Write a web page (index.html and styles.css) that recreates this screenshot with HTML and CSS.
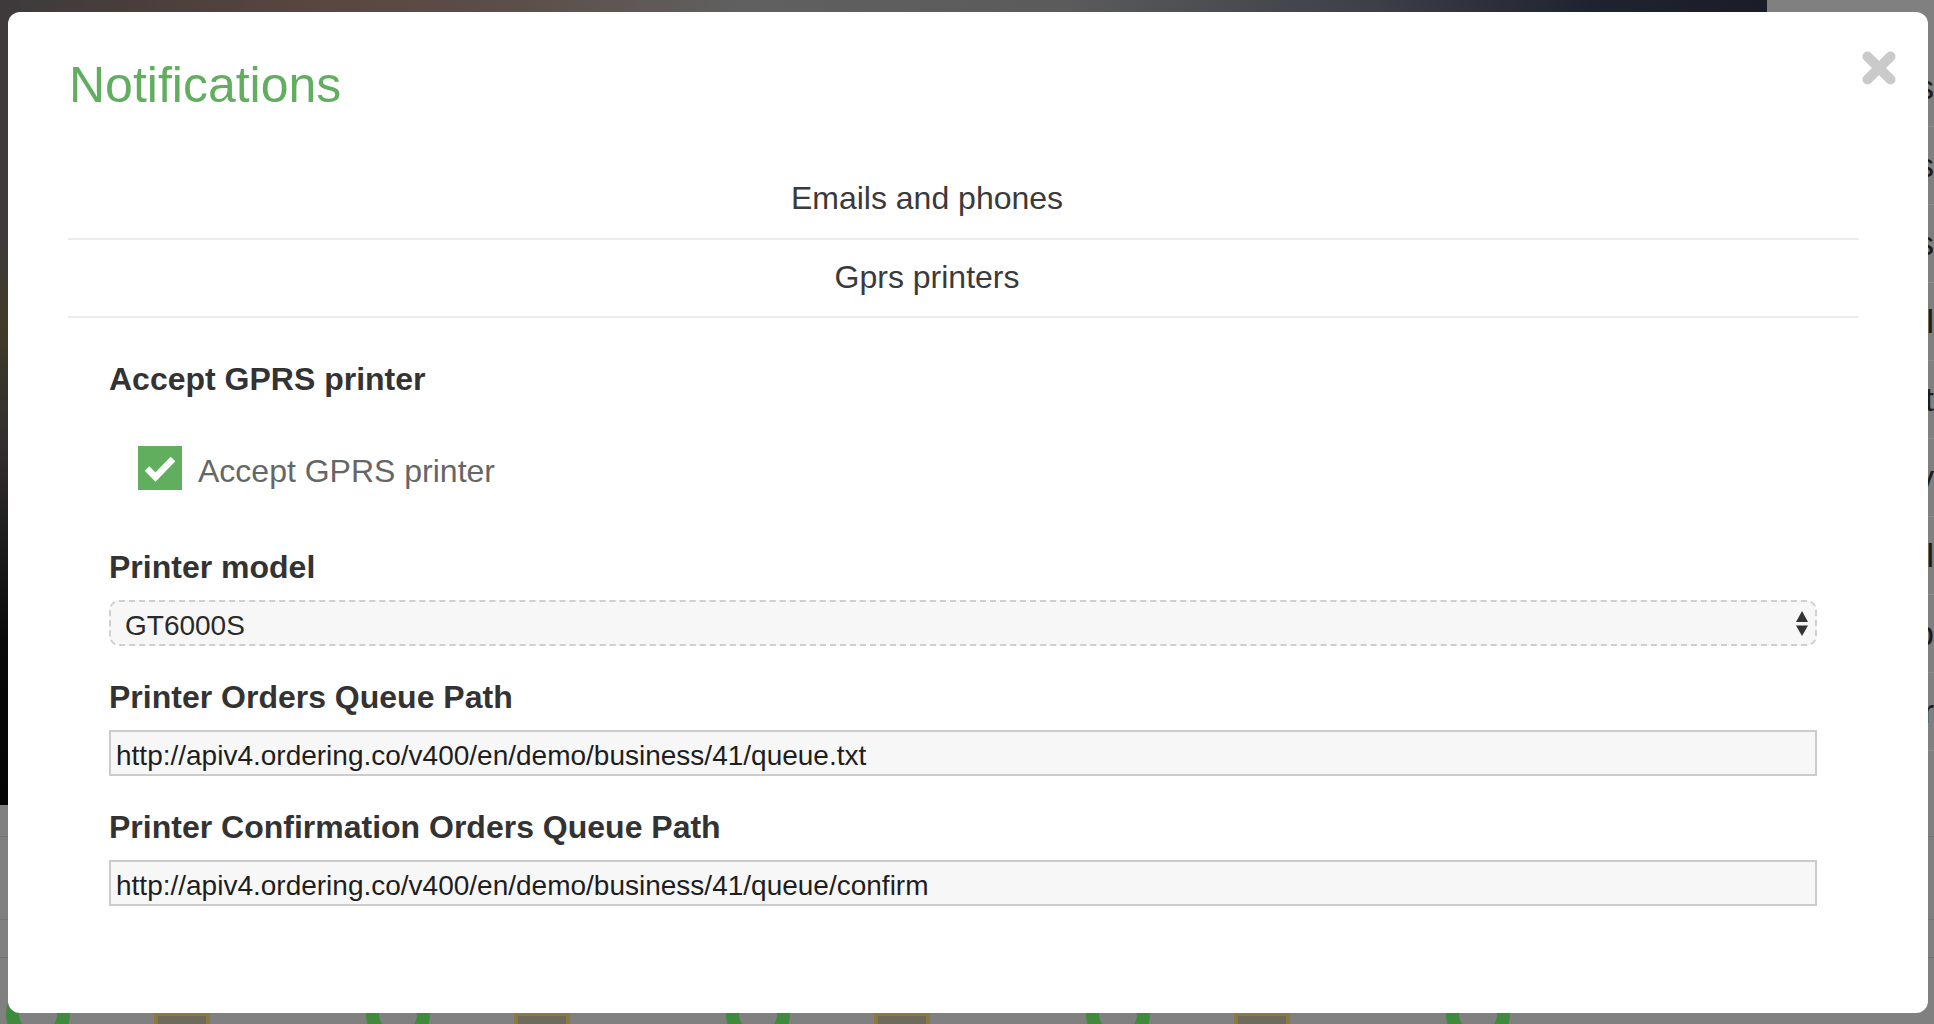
FILE: index.html
```html
<!DOCTYPE html>
<html lang="en">
<head>
<meta charset="utf-8">
<title>Notifications</title>
<link rel="stylesheet" href="styles.css">
</head>
<body>
<div class="page">
  <div class="top">
    <div class="hero"></div>
    <div class="side">
      <div class="side-row"><span>Schedules</span></div>
      <div class="side-row"><span>Zones</span></div>
      <div class="side-row"><span>Menus</span></div>
      <div class="side-row"><span>Email</span></div>
      <div class="side-row"><span>Print</span></div>
      <div class="side-row"><span>Delivery</span></div>
      <div class="side-row"><span>Total</span></div>
      <div class="side-row"><span>Web</span></div>
      <div class="side-row"><span>Order</span></div>
    </div>
  </div>
  <div class="list">
    <div class="list-row list-row-a"></div>
    <div class="list-row list-row-b"></div>
    <div class="list-row list-row-c"></div>
  </div>
  <div class="cards">
    <div class="card"><span class="ring"></span><span class="printer"></span></div>
    <div class="card"><span class="ring"></span><span class="printer"></span></div>
    <div class="card"><span class="ring"></span><span class="printer"></span></div>
    <div class="card"><span class="ring"></span><span class="printer"></span></div>
    <div class="card"><span class="ring"></span></div>
  </div>
</div>

<div class="modal">
  <button class="close" type="button" aria-label="Close">
    <svg width="34" height="34" viewBox="0 0 34 34"><path d="M5.5 5.5 L28.5 28.5 M28.5 5.5 L5.5 28.5" stroke="#cacaca" stroke-width="10" stroke-linecap="round" fill="none"/></svg>
  </button>
  <h1 class="title">Notifications</h1>
  <ul class="tabs">
    <li class="tab tab-first">Emails and phones</li>
    <li class="tab tab-second">Gprs printers</li>
  </ul>
  <form class="form">
    <h3 class="label label-first">Accept GPRS printer</h3>
    <label class="check">
      <span class="box"><svg width="44" height="44" viewBox="0 0 44 44"><polyline points="9,22.5 17.5,31 35,13" fill="none" stroke="#fff" stroke-width="6.5"/></svg></span>
      <span class="check-text">Accept GPRS printer</span>
    </label>
    <div class="group group-model">
      <h3 class="label">Printer model</h3>
      <div class="select">
        <span class="select-value">GT6000S</span>
        <svg class="arrows" width="12" height="26" viewBox="0 0 12 26"><polygon points="0,11 6,0 12,11" fill="#333"/><polygon points="0,14.5 12,14.5 6,25" fill="#333"/></svg>
      </div>
    </div>
    <div class="group">
      <h3 class="label">Printer Orders Queue Path</h3>
      <input class="field" type="text" value="http://apiv4.ordering.co/v400/en/demo/business/41/queue.txt">
    </div>
    <div class="group">
      <h3 class="label">Printer Confirmation Orders Queue Path</h3>
      <input class="field" type="text" value="http://apiv4.ordering.co/v400/en/demo/business/41/queue/confirm">
    </div>
  </form>
</div>
</body>
</html>
```

FILE: styles.css
```css
* { box-sizing: border-box; }

html, body {
  margin: 0;
  padding: 0;
}

body {
  width: 1934px;
  height: 1024px;
  overflow: hidden;
  background: #808080;
  font-family: "Liberation Sans", Arial, Helvetica, sans-serif;
  position: relative;
}

/* ---------- dimmed page behind the modal ---------- */
.page {
  display: flex;
  flex-direction: column;
}

.top {
  display: flex;
  height: 805px;
}

.hero {
  width: 1767px;
  height: 805px;
  background:
    linear-gradient(180deg, rgba(0,0,0,0) 0%, rgba(0,0,0,0) 30%, rgba(70,60,25,0.6) 40%, rgba(0,0,0,0.2) 55%, rgba(0,0,0,0.85) 80%, #050505 100%),
    linear-gradient(90deg, #3d3a3b 0%, #4a3e3c 8%, #5a4640 18%, #5c4d48 28%, #606060 42%, #5b5b5c 60%, #3c3f48 78%, #1f2230 90%, #1a1d28 100%);
}

.side {
  flex: 1;
  overflow: hidden;
  padding-top: 49px;
  display: flex;
  flex-direction: column;
}

.side-row {
  height: 78px;
  flex: none;
  border-bottom: 1px solid #8d8d8d;
  display: flex;
  align-items: center;
  justify-content: flex-end;
  font-size: 34px;
  color: #1c1c1c;
  white-space: nowrap;
}

.list {
  display: flex;
  flex-direction: column;
}

.list-row {
  border-bottom: 1px solid #737373;
}

.list-row-a { height: 32px; }
.list-row-b { height: 83px; }
.list-row-c { height: 38px; }

.cards {
  display: flex;
  padding: 24px 0 0 6px;
}

.card {
  width: 360px;
  flex: none;
  display: flex;
  align-items: flex-start;
}

.ring {
  width: 64px;
  height: 64px;
  border-radius: 50%;
  border: 13px solid #3f8a3d;
  flex: none;
}

.printer {
  width: 56px;
  height: 50px;
  margin: 30px 0 0 84px;
  background: #6e6a5c;
  border: 4px solid #8a7a40;
  flex: none;
}

/* ---------- modal ---------- */
.modal {
  position: absolute;
  left: 8px;
  top: 12px;
  width: 1920px;
  height: 1001px;
  background: #fff;
  border-radius: 12px;
  padding: 45px 69px 0 60px;
}

.close {
  position: absolute;
  top: 39px;
  right: 32px;
  width: 34px;
  height: 34px;
  padding: 0;
  margin: 0;
  border: 0;
  background: none;
  display: flex;
}

.title {
  margin: 0 0 0 1px;
  font-size: 50px;
  line-height: 56px;
  font-weight: normal;
  color: #62ae5f;
}

.tabs {
  list-style: none;
  margin: 48px 0 0;
  padding: 0;
}

.tab {
  font-size: 32px;
  line-height: 36px;
  color: #3a3a3a;
  text-align: center;
  padding-right: 73px;
  border-bottom: 2px solid #ececec;
}

.tab-first { padding-top: 19px; padding-bottom: 22px; }
.tab-second { padding-top: 19px; padding-bottom: 21px; }

.form {
  margin: 0;
  padding: 44px 42px 0 41px;
  display: flex;
  flex-direction: column;
}

.label {
  margin: -1px 0 1px;
  font-size: 32px;
  line-height: 36px;
  font-weight: bold;
  color: #333;
}

.check {
  display: flex;
  align-items: flex-start;
  margin: 48px 0 0 29px;
  height: 44px;
}

.box {
  width: 44px;
  height: 44px;
  background: #62ae5f;
  display: flex;
  flex: none;
}

.check-text {
  margin: 7px 0 0 16px;
  font-size: 32px;
  line-height: 36px;
  color: #666;
}

.group {
  display: flex;
  flex-direction: column;
  margin-top: 34px;
}

.group-model {
  margin-top: 60px;
}

.select {
  margin-top: 14px;
  height: 46px;
  border: 2px dashed #cfcfcf;
  border-radius: 10px;
  background: #f7f7f7;
  display: flex;
  align-items: center;
  justify-content: space-between;
  padding: 0 7px 0 14px;
}

.select-value {
  font-size: 28px;
  color: #2a2a2a;
  padding-top: 5px;
}

.arrows {
  margin-top: 2px;
}

.field {
  margin: 14px 0 0;
  width: 100%;
  height: 46px;
  border: 2px solid #cccccc;
  border-radius: 0;
  background: #f7f7f7;
  padding: 5px 5px 0;
  font-family: "Liberation Sans", Arial, Helvetica, sans-serif;
  font-size: 28px;
  color: #1e1e1e;
  outline: none;
}
```
